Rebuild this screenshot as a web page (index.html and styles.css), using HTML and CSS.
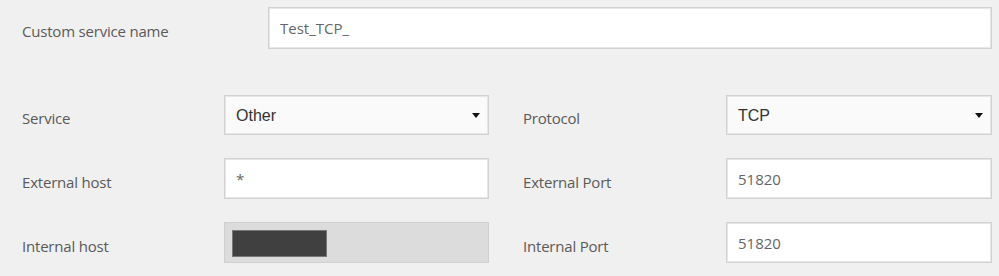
FILE: index.html
```html
<!DOCTYPE html>
<html lang="en">
<head>
  <meta charset="UTF-8">
  <meta name="viewport" content="width=device-width, initial-scale=1">
  <title>Port forwarding</title>
  <link rel="stylesheet" href="styles.css">
</head>
<body>

<form class="rule-form">
  <div class="row-wide">
    <label class="label" for="svcname">Custom service name</label>
    <input class="field" id="svcname" type="text" value="Test_TCP_">
  </div>

  <div class="row-pair first">
    <label class="label" for="service">Service</label>
    <div class="select-wrap">
      <select class="field select" id="service">
        <option>Other</option>
      </select>
      <svg class="caret" width="8" height="5" viewBox="0 0 8 5"><path d="M0 0h8L4 5z" fill="#111"/></svg>
    </div>
    <label class="label right" for="protocol">Protocol</label>
    <div class="select-wrap">
      <select class="field select" id="protocol">
        <option>TCP</option>
      </select>
      <svg class="caret" width="8" height="5" viewBox="0 0 8 5"><path d="M0 0h8L4 5z" fill="#111"/></svg>
    </div>
  </div>

  <div class="row-pair">
    <label class="label" for="exthost">External host</label>
    <input class="field" id="exthost" type="text" value="*">
    <label class="label right" for="extport">External Port</label>
    <input class="field" id="extport" type="text" value="51820">
  </div>

  <div class="row-pair">
    <span class="label">Internal host</span>
    <div class="field disabled"><span class="redacted"></span></div>
    <label class="label right" for="intport">Internal Port</label>
    <input class="field" id="intport" type="text" value="51820">
  </div>
</form>

</body>
</html>
```

FILE: styles.css
```css
* {
  box-sizing: border-box;
}

body {
  margin: 0;
  background-color: #f0f0f0;
  font-family: "Open Sans", Arial, sans-serif;
  color: #555;
}

.rule-form {
  padding: 7px 7px 0 22px;
}

.row-wide {
  display: grid;
  grid-template-columns: 246px 724px;
  align-items: center;
}

.row-pair {
  display: grid;
  grid-template-columns: 202px 265px 237px 266px;
  align-items: center;
  margin-top: 23px;
}

.row-pair.first {
  margin-top: 46px;
}

.label {
  font-size: 15px;
  color: #5a5a5a;
  letter-spacing: -0.2px;
  padding-top: 6px;
}

.label.right {
  padding-left: 34px;
}

.field {
  display: block;
  width: 100%;
  height: 41px;
  margin: 0;
  padding: 0 11px;
  border: 1px solid #d2d2d2;
  box-shadow: inset 0 0 0 1px #e6e6e6;
  background: #fff;
  font-family: "Open Sans", Arial, sans-serif;
  font-size: 15px;
  color: #666;
  outline: none;
}

.row-wide .field {
  height: 42px;
}

.select-wrap {
  position: relative;
}

.select {
  appearance: none;
  -webkit-appearance: none;
  height: 40px;
  background: #fafafa;
  font-family: "Liberation Sans", Arial, sans-serif;
  font-size: 16px;
  color: #333;
}

.caret {
  position: absolute;
  right: 9px;
  top: 18px;
}

.field.disabled {
  background: #dcdcdc;
  border-color: #cfcfcf;
  box-shadow: none;
  padding: 7px;
}

.redacted {
  display: block;
  width: 95px;
  height: 27px;
  background: #404040;
  border: 1px solid #777;
}
```
